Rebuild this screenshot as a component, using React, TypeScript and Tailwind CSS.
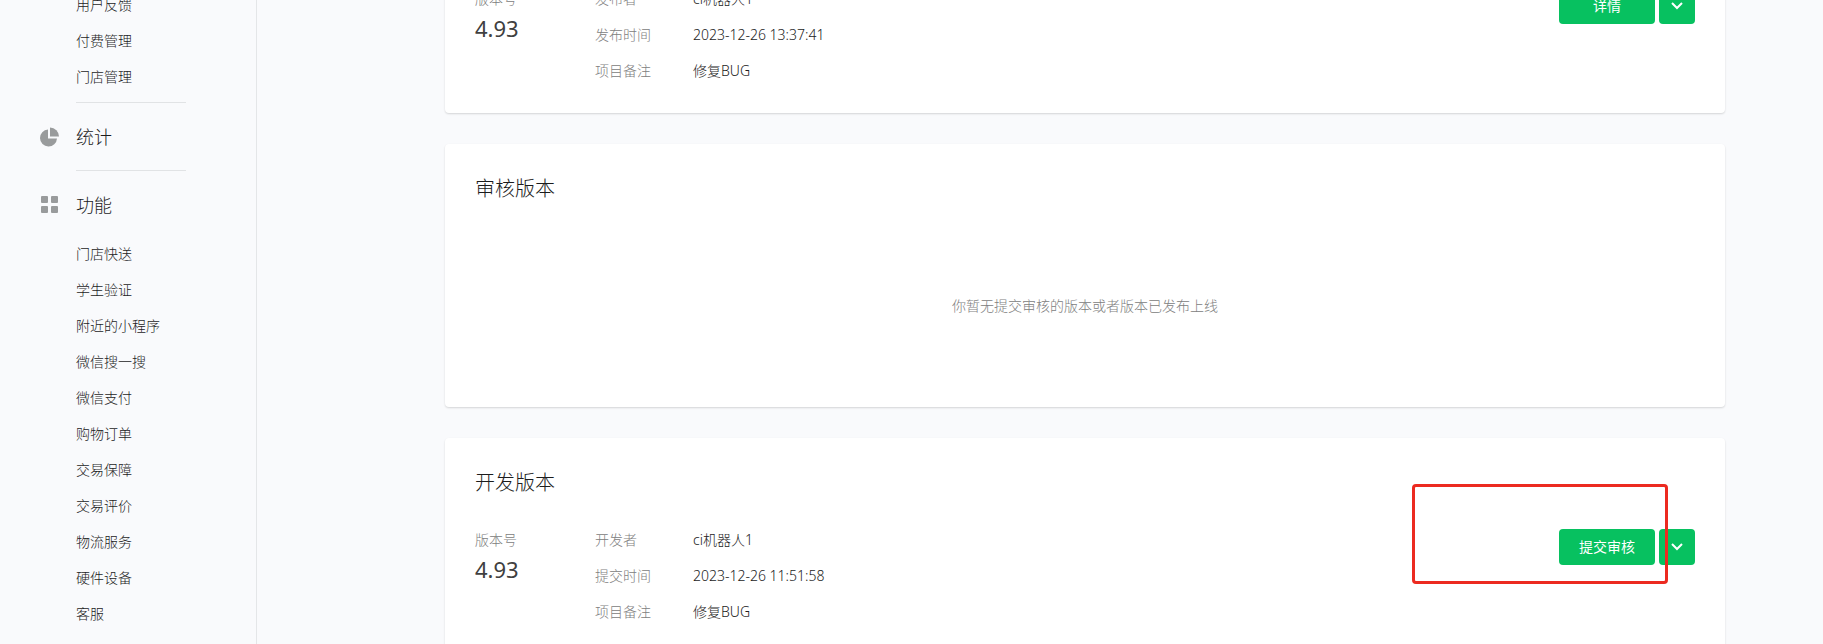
import { ReactNode } from "react";

interface VersionInfo {
  version: string;
  rows: { label: string; value: string }[];
  action: string;
}

const manageLinks = ["用户反馈", "付费管理", "门店管理"];

const featureLinks = [
  "门店快送",
  "学生验证",
  "附近的小程序",
  "微信搜一搜",
  "微信支付",
  "购物订单",
  "交易保障",
  "交易评价",
  "物流服务",
  "硬件设备",
  "客服",
];

const released: VersionInfo = {
  version: "4.93",
  rows: [
    { label: "发布者", value: "ci机器人1" },
    { label: "发布时间", value: "2023-12-26 13:37:41" },
    { label: "项目备注", value: "修复BUG" },
  ],
  action: "详情",
};

const development: VersionInfo = {
  version: "4.93",
  rows: [
    { label: "开发者", value: "ci机器人1" },
    { label: "提交时间", value: "2023-12-26 11:51:58" },
    { label: "项目备注", value: "修复BUG" },
  ],
  action: "提交审核",
};

function PieIcon() {
  return (
    <svg width="20" height="20" viewBox="0 0 20 20" fill="#999b9c" aria-hidden="true">
      <path d="M8 2.5V11.5H17A8.5 8.5 0 1 1 8 2.5Z" />
      <path d="M10 0.5A9 9 0 0 1 19 9.5H10Z" />
    </svg>
  );
}

function GridIcon() {
  return (
    <svg width="20" height="20" viewBox="0 0 20 20" fill="#999b9c" aria-hidden="true">
      <rect x="1" y="1" width="7" height="7" rx="1" />
      <rect x="11" y="1" width="7" height="7" rx="1" />
      <rect x="1" y="11" width="7" height="7" rx="1" />
      <rect x="11" y="11" width="7" height="7" rx="1" />
    </svg>
  );
}

function NavList({ items }: { items: string[] }) {
  return (
    <ul className="pb-[5px] pl-9">
      {items.map((item) => (
        <li key={item}>
          <a href="#" className="block text-sm leading-9 hover:text-[#07c160]">
            {item}
          </a>
        </li>
      ))}
    </ul>
  );
}

function NavHeading({ icon, children }: { icon: ReactNode; children: ReactNode }) {
  return (
    <a href="#" className="flex h-[62px] items-center gap-4 text-lg">
      {icon}
      {children}
    </a>
  );
}

function Divider() {
  return <hr className="mt-0.5 mb-[3px] ml-9 w-[110px] border-[#e1e3e5]" />;
}

function Card({ title, children }: { title?: string; children: ReactNode }) {
  return (
    <section className="relative rounded bg-white px-[30px] pb-6 shadow-[0_1px_2px_rgba(0,0,0,0.15)]">
      {title && <h2 className="pt-[30px] text-xl leading-[30px]">{title}</h2>}
      {children}
    </section>
  );
}

function VersionDetails({ info }: { info: VersionInfo }) {
  return (
    <div className="flex items-start pt-6">
      <dl className="w-[120px]">
        <dt className="text-sm leading-9 text-[#808080]">版本号</dt>
        <dd className="text-[22px] leading-[22px] font-normal text-[#404040]">{info.version}</dd>
      </dl>
      <dl className="grid flex-1 grid-cols-[98px_1fr] text-sm leading-9">
        {info.rows.map((row) => (
          <div key={row.label} className="contents">
            <dt className="text-[#808080]">{row.label}</dt>
            <dd>{row.value}</dd>
          </div>
        ))}
      </dl>
      <div className="mt-[7px] flex gap-1">
        <button type="button" className="h-9 w-24 rounded bg-[#07c160] text-sm font-normal text-white">
          {info.action}
        </button>
        <button
          type="button"
          aria-label="更多操作"
          className="flex size-9 items-center justify-center rounded bg-[#07c160]"
        >
          <svg width="12" height="8" viewBox="0 0 12 8" fill="none" stroke="#fff" strokeWidth="2" aria-hidden="true">
            <path d="M1 1L6 6L11 1" />
          </svg>
        </button>
      </div>
    </div>
  );
}

export default function App() {
  return (
    <div className="flex h-screen overflow-hidden bg-[#f9fafc] font-['Noto_Sans','Noto_Sans_CJK_SC',sans-serif] font-light text-[#1c1c1c]">
      <aside className="w-[257px] shrink-0 border-r border-[#e4e6e8] pl-10">
        <nav className="-mt-[13px]">
          <NavList items={manageLinks} />
          <Divider />
          <NavHeading icon={<PieIcon />}>统计</NavHeading>
          <Divider />
          <NavHeading icon={<GridIcon />}>功能</NavHeading>
          <NavList items={featureLinks} />
        </nav>
      </aside>

      <main className="-mt-[43px] flex flex-1 flex-col gap-[31px] pr-[98px] pl-[188px]">
        <Card>
          <VersionDetails info={released} />
        </Card>

        <Card title="审核版本">
          <p className="pt-[92px] pb-[67px] text-center text-sm text-[#808080]">
            你暂无提交审核的版本或者版本已发布上线
          </p>
        </Card>

        <Card title="开发版本">
          <VersionDetails info={development} />
          <div className="pointer-events-none absolute top-[46px] right-[57px] h-[100px] w-64 rounded border-3 border-[#ec2a20]" />
        </Card>
      </main>
    </div>
  );
}
